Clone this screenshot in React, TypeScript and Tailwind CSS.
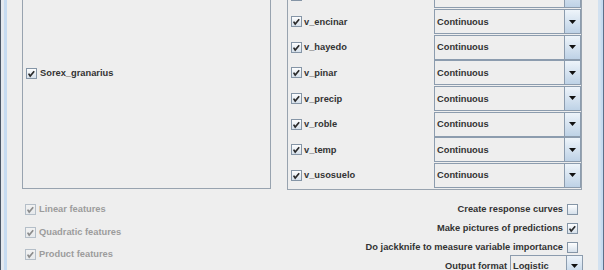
import React from "react";

const rows = [
  "",
  "v_encinar",
  "v_hayedo",
  "v_pinar",
  "v_precip",
  "v_roble",
  "v_temp",
  "v_usosuelo",
];

function Check({ checked, disabled }: { checked: boolean; disabled?: boolean }) {
  const edge = disabled ? "#b4bec8" : "#8595a6";
  const mark = disabled ? "#8c8c8c" : "#2b2b2b";
  return (
    <svg width="11" height="11" viewBox="0 0 11 11" className="shrink-0">
      <defs>
        <linearGradient id={disabled ? "cbd" : "cbe"} x1="0" y1="0" x2="0" y2="1">
          <stop offset="0" stopColor={disabled ? "#f2f2f2" : "#ffffff"} />
          <stop offset="1" stopColor={disabled ? "#e6e9ec" : "#d4dfea"} />
        </linearGradient>
      </defs>
      <rect x="0.5" y="0.5" width="10" height="10" fill={`url(#${disabled ? "cbd" : "cbe"})`} stroke={edge} />
      {checked && (
        <path d="M2.6 5.6 L4.2 8 L8.2 3.2" fill="none" stroke={mark} strokeWidth="1.7" />
      )}
    </svg>
  );
}

function Combo({ value, className }: { value: string; className: string }) {
  return (
    <div className={`flex border border-[#8c9cae] ${className}`}>
      <div className="flex-1 flex items-center pl-[2px] pt-[2px] bg-[#eeeeee]">{value}</div>
      <div className="w-[16px] border-l border-[#8c9cae] bg-gradient-to-b from-[#eef4fa] to-[#bed2e6] flex items-center justify-center">
        <svg width="7" height="4" viewBox="0 0 7 4">
          <path d="M0 0 H7 L3.5 4 Z" fill="#111" />
        </svg>
      </div>
    </div>
  );
}

export default function App() {
  return (
    <div className="w-[604px] h-[270px] overflow-hidden bg-[#eeeeee] flex font-['Liberation_Sans',Arial,sans-serif] text-[9.3px] font-bold text-[#333333]">
      {/* window frame, left */}
      <div className="flex shrink-0">
        <div className="w-px bg-[#4b5767]" />
        <div className="w-[3px] bg-[#e4e9ef]" />
        <div className="w-[3px] bg-[#c6dbf1]" />
      </div>

      <div className="flex-1 flex flex-col">
        {/* species + variables */}
        <div className="flex gap-[16px] pl-[15px] pr-[15px] items-start">
          <div className="w-[249px] h-[189px] border-x border-b border-[#98a3af] pl-[3px] pt-[65px]">
            <div className="h-[16px] flex items-center gap-[3px]">
              <Check checked />
              <span className="pt-[1px]">Sorex_granarius</span>
            </div>
          </div>

          <div className="w-[295px] h-[190px] border-x border-b border-[#98a3af] overflow-hidden">
            {/* list is scrolled: first row only shows its bottom edge */}
            <div className="mt-[-16.67px]">
              {rows.map((name, i) => (
                <div key={i} className="h-[25.67px] flex items-start">
                  <div className="w-[146px] h-[25px] flex items-center pl-[3px] gap-[2px]">
                    <Check checked />
                    {name && <span className="pt-[2px]">{name}</span>}
                  </div>
                  <Combo value={name ? "Continuous" : ""} className="w-[147px] h-[25px]" />
                </div>
              ))}
            </div>
          </div>
        </div>

        {/* options */}
        <div className="flex justify-between">
          <div className="pl-[18px] pt-[8.5px] text-[#9c9c9c]">
            {["Linear features", "Quadratic features", "Product features"].map((t) => (
              <div key={t} className="h-[22.5px] flex items-center gap-[3px]">
                <Check checked disabled />
                <span className="pt-[1px]">{t}</span>
              </div>
            ))}
          </div>

          <div className="pr-[16px] pt-[10px] flex flex-col items-end">
            <div className="h-[19px] flex items-center gap-[4px] pr-[4px]">
              <span className="pt-[1px]">Create response curves</span>
              <Check checked={false} />
            </div>
            <div className="h-[19px] flex items-center gap-[4px] pr-[4px]">
              <span className="pt-[1px]">Make pictures of predictions</span>
              <Check checked />
            </div>
            <div className="h-[19px] flex items-center gap-[4px] pr-[4px]">
              <span className="pt-[1px]">Do jackknife to measure variable importance</span>
              <Check checked={false} />
            </div>
            <div className="mt-[-2px] pl-[1px] flex items-center gap-[3px]">
              <span className="pt-[2px]">Output format</span>
              <Combo value="Logistic" className="w-[73px] h-[22px] mr-[-1px]" />
            </div>
          </div>
        </div>
      </div>

      {/* window frame, right */}
      <div className="flex shrink-0">
        <div className="w-[3px] bg-[#d2e1f0]" />
        <div className="w-[2px] bg-[#c6dbf1]" />
        <div className="w-px bg-[#5d708a]" />
      </div>
    </div>
  );
}
